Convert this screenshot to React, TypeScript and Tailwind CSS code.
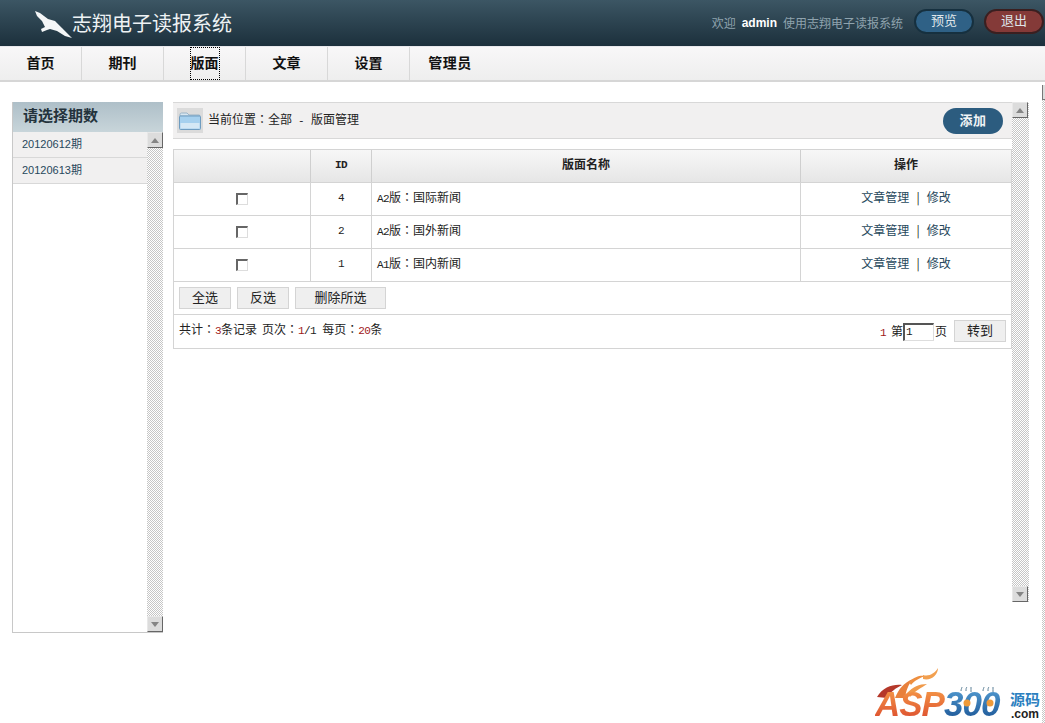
import type { ReactNode } from "react"

const cjk = "font-['Noto_Sans_CJK_SC','Liberation_Sans',sans-serif]"
const mono = "font-['Liberation_Mono','Noto_Sans_CJK_SC',monospace] text-[11px] tracking-[-0.6px]"
const checker = "bg-[repeating-conic-gradient(#c6c6c6_0_25%,#ffffff_0_50%)] bg-[length:2px_2px]"

const navItems = ["首页", "期刊", "版面", "文章", "设置", "管理员"]

const rows = [
  { id: "4", code: "A2", name: "国际新闻" },
  { id: "2", code: "A2", name: "国外新闻" },
  { id: "1", code: "A1", name: "国内新闻" },
]

// the TC face centres the full-width colon, as the reference does
function Colon() {
  return <span className="font-['Noto_Sans_CJK_TC',sans-serif]">：</span>
}

function ScrollArrow({ up, className }: { up?: boolean; className?: string }) {
  return (
    <div className={`flex h-4 w-4 shrink-0 items-center justify-center border border-t-[#e8e8e8] border-l-[#e8e8e8] border-r-[#666] border-b-[#666] bg-[#dcdcdc] ${className ?? ""}`}>
      <svg width="8" height="5" viewBox="0 0 8 5">
        <path d={up ? "M4 0 8 5H0Z" : "M0 0H8L4 5Z"} fill="#858585" />
      </svg>
    </div>
  )
}

function Scrollbar({ className }: { className: string }) {
  return (
    <div className={`flex flex-col justify-between ${checker} ${className}`}>
      <ScrollArrow up />
      <ScrollArrow />
    </div>
  )
}

function GreyButton({ children, className }: { children: ReactNode; className: string }) {
  return (
    <button className={`h-[22px] border border-[#d4d4d4] bg-[#efefef] pb-[4px] text-[13px] leading-none text-[#222] ${className}`}>
      {children}
    </button>
  )
}

function Pill({ children, className }: { children: ReactNode; className: string }) {
  return (
    <button className={`flex h-[25px] w-[60px] items-center justify-center rounded-full border-2 pb-[4px] text-[13px] leading-none text-[#dfe6ea] ${className}`}>
      {children}
    </button>
  )
}

export default function App() {
  return (
    <div className={`relative flex h-[723px] w-[1045px] flex-col overflow-hidden bg-white text-[12px] ${cjk}`}>
      {/* header */}
      <header className="flex h-[46px] shrink-0 items-center justify-between bg-gradient-to-b from-[#3c5664] to-[#1c303c] pr-[1px]">
        <div className="flex items-center pl-[34px]">
          <svg width="38" height="29" viewBox="0 0 38 29" className="mt-[2px]">
            <path d="M1 1 6 3 14 9 21 11 28 18 37 27 38 28 31 26 23 21 16 19 13 20 8 22 7 19 11 17 8 11 3 6Z" fill="#f4f6f7" />
          </svg>
          <span className="mb-[1px] text-[20px] leading-none text-[#eef2f4]">志翔电子读报系统</span>
        </div>
        <div className="flex items-center">
          <span className="mb-[1px] text-[12px] text-[#8fa3ae]">欢迎</span>
          <span className="mx-[6px] mb-[1px] font-['Liberation_Sans',sans-serif] text-[12px] font-bold text-white">admin</span>
          <span className="mb-[1px] text-[12px] text-[#8fa3ae]">使用志翔电子读报系统</span>
          <Pill className="mb-[3px] ml-[11px] border-[#16303f] bg-[#2f6186]">预览</Pill>
          <Pill className="mb-[3px] ml-[10px] border-[#3a1f20] bg-[#843a38]">退出</Pill>
        </div>
      </header>

      {/* nav */}
      <nav className="flex h-[36px] shrink-0 border-t border-b-2 border-t-[#e8e8ec] border-b-[#d6d6d6] bg-gradient-to-b from-[#f8f7f8] to-[#eeeeee]">
        {navItems.map((item, i) => (
          <div key={item} className={`flex h-full w-[82px] items-center justify-center pb-[2px] text-[14px] font-bold text-[#111] ${i < 5 ? "border-r border-r-[#d8d8d8]" : ""}`}>
            <span className={i === 2 ? "mt-[2px] flex h-[33px] items-center border border-dotted border-black pb-[2px]" : i === 5 ? "mr-[2px] tracking-[0.5px]" : ""}>{item}</span>
          </div>
        ))}
      </nav>

      {/* body */}
      <div className="flex min-h-0 flex-1 items-start pt-[20px] pl-[12px]">
        {/* left list */}
        <aside className="flex h-[531px] w-[151px] shrink-0 flex-col border-r-0 border-b border-l border-[#c8c8c8]">
          <div className="flex h-[30px] shrink-0 items-center bg-gradient-to-b from-[#aebfc8] to-[#c8d5da] pb-[3px] pl-[10px] text-[15px] font-bold text-[#24333c]">请选择期数</div>
          <div className="flex min-h-0 flex-1">
            <div className="min-w-0 flex-1">
              {["20120612期", "20120613期"].map((d) => (
                <div key={d} className="flex h-[26px] items-center border-b border-[#d8d8d8] bg-[#f1f0f0] pl-[9px] text-[12px] text-[#27485c]">
                  <span className="font-['Liberation_Sans','Noto_Sans_CJK_SC',sans-serif] text-[11px]">{d}</span>
                </div>
              ))}
            </div>
            <Scrollbar className="w-[16px] shrink-0" />
          </div>
        </aside>

        {/* main panel */}
        <main className="ml-[10px] w-[839px] shrink-0">
          <div className="flex h-[37px] items-center justify-between border-t border-b border-[#d8d8d8] bg-[#f1f0f0] pr-[9px] pl-[4px]">
            <div className="flex items-center">
              <div className="flex h-[25px] w-[26px] items-center justify-center bg-[#dbdbdb]">
                <svg width="22" height="18" viewBox="0 0 22 18">
                  <path d="M1 4V2.5C1 1.7 1.7 1 2.500 1H8L10 3H20C20.600 3 21 3.400 21 4Z" fill="#d8e6f0" stroke="#8aa8c0" strokeWidth="0.8" />
                  <rect x="0.500" y="4" width="21" height="13.500" rx="1" fill="#a6d0ee" stroke="#6f9cc0" />
                  <rect x="1.500" y="11" width="19" height="5.500" fill="#d5e8f5" />
                </svg>
              </div>
              <span className="mb-[1px] ml-[5px] text-[12px] text-[#222]">
                当前位置<Colon />全部<span className={`${mono} mr-[7px] ml-[6px]`}>-</span>版面管理
              </span>
            </div>
            <button className="flex h-[26px] w-[60px] items-center justify-center rounded-full bg-[#2c5c7f] pb-[2px] text-[13px] font-bold tracking-[0.5px] text-[#f0f4f6]">添加</button>
          </div>

          <div className="mt-[10px] flex h-[34px] border-t border-r border-b border-l border-[#d4d4d4] bg-gradient-to-b from-[#f7f7f7] to-[#e6e6e6] text-[12px] font-bold text-[#222]">
            <div className="w-[137px] border-r border-[#cfcfcf]" />
            <div className="flex w-[61px] items-center justify-center border-r border-[#cfcfcf] pb-[1px]">
              <span className={mono}>ID</span>
            </div>
            <div className="flex w-[429px] items-center justify-center border-r border-[#cfcfcf] pb-[4px]">版面名称</div>
            <div className="flex flex-1 items-center justify-center pb-[4px]">操作</div>
          </div>

          {rows.map((r) => (
            <div key={r.name} className="flex h-[33px] border-r border-b border-l border-[#d4d4d4] text-[12px] text-[#222]">
              <div className="flex w-[137px] items-center justify-center border-r border-[#d4d4d4]">
                <div className="h-[12px] w-[12px] border border-t-2 border-l-2 border-t-[#666] border-r-[#ddd] border-b-[#ddd] border-l-[#666] bg-white" />
              </div>
              <div className="flex w-[61px] items-center justify-center border-r border-[#d4d4d4] pb-[2px]">
                <span className={mono}>{r.id}</span>
              </div>
              <div className="flex w-[429px] items-center border-r border-[#d4d4d4] pb-[3px] pl-[5px]">
                <span><span className={mono}>{r.code}</span>版<Colon />{r.name}</span>
              </div>
              <div className="flex flex-1 items-center justify-center pb-[4px] text-[#27485c]">
                文章管理<span className="mx-[7px] text-[#222]">|</span>修改
              </div>
            </div>
          ))}

          <div className="flex h-[33px] items-center gap-[6px] border-r border-b border-l border-[#d4d4d4] pl-[5px]">
            <GreyButton className="w-[52px]">全选</GreyButton>
            <GreyButton className="w-[52px]">反选</GreyButton>
            <GreyButton className="w-[91px]">删除所选</GreyButton>
          </div>

          <div className="flex h-[34px] items-start justify-between border-r border-b border-l border-[#d4d4d4] pr-[5px] pl-[5px] text-[12px] text-[#222]">
            <span className="mt-[5px]">
              共计<Colon /><span className={`${mono} text-[#a01818]`}>3</span>条记录<span className="ml-[5px]">页次</span><Colon /><span className={`${mono} text-[#a01818]`}>1</span><span className={mono}>/1</span><span className="ml-[6px]">每页</span><Colon /><span className={`${mono} text-[#a01818]`}>20</span>条
            </span>
            <div className="mt-[5px] flex items-start">
              <span className={`${mono} mt-[5px] mr-[5px] text-[#a01818]`}>1</span>
              <span className="mt-[2px]">第</span>
              <div className="mt-[3px] flex h-[18px] w-[31px] items-center border border-t-2 border-l-2 border-t-[#555] border-r-[#ddd] border-b-[#ddd] border-l-[#555] bg-white pl-[1px]">
                <span className={mono}>1</span>
              </div>
              <span className="mt-[2px] ml-[1px]">页</span>
              <GreyButton className="ml-[7px] w-[52px]">转到</GreyButton>
            </div>
          </div>
        </main>

        <Scrollbar className="h-[500px] w-[17px] shrink-0" />

        {/* page scrollbar, cut off by the window edge */}
        <div className={`mt-[-17px] ml-[13px] flex h-[640px] w-[4px] shrink-0 flex-col ${checker}`}>
          <div className="h-[15px] border-b border-l border-[#777] bg-[#dcdcdc]" />
        </div>
      </div>

      {/* site watermark */}
      <div className="absolute right-[5px] bottom-[2px] h-[54px] w-[165px]">
        <svg width="70" height="34" viewBox="0 0 70 34" className="absolute top-0 left-0">
          <path d="M2 30C8 20 18 17 27 18 21 21 15 25 12 31Z" fill="#b5382a" />
          <path d="M20 31C24 22 28 16 38 12 33 18 31 24 30 31Z" fill="#e8803c" />
          <path d="M32 26C38 20 44 17 52 17 46 21 40 24 35 30Z" fill="#f09a4a" />
          <path d="M34 15C40 9 46 8 50 9 45 11 40 13 36 18Z" fill="#ee8f40" />
          <path d="M48 8C54 10 60 6 63 1 63 8 56 14 48 12Z" fill="#f2a050" />
        </svg>
        <div className="absolute bottom-[-3px] left-0 flex items-end font-['Liberation_Sans',sans-serif] text-[35px] leading-[40px] font-bold italic tracking-[-1px]">
          <span className="bg-gradient-to-b from-[#f7a14b] to-[#d8402c] bg-clip-text pr-[3px] text-transparent">ASP</span>
          <span className="ml-[-3px] bg-gradient-to-b from-[#5aa4d8] to-[#164f90] bg-clip-text pr-[3px] text-transparent">300</span>
        </div>
        {/* lashes and yolks of the two zeros */}
        <svg width="50" height="32" viewBox="0 0 50 32" className="absolute right-[37px] bottom-[3px]">
          <path d="M8 5C8 3 9 2 9 1M13 5C13 3 13 2 14 1M18 6C18 4 18 3 18 1M30 5C30 3 31 2 31 1M35 5C35 3 35 2 36 1M40 6C40 4 40 3 40 1" fill="none" stroke="#5b7f96" strokeWidth="1" />
          <circle cx="14" cy="17" r="3.500" fill="#ee9a3a" />
          <circle cx="37" cy="17" r="3.500" fill="#ee9a3a" />
        </svg>
        <div className="absolute right-0 bottom-[1px] flex flex-col items-center gap-[2px] leading-none">
          <span className="text-[15px] leading-[15px] font-bold text-[#2b7fbf]">源码</span>
          <span className="font-['Liberation_Sans',sans-serif] text-[12px] leading-[12px] font-bold text-[#222]">.com</span>
        </div>
      </div>
    </div>
  )
}
